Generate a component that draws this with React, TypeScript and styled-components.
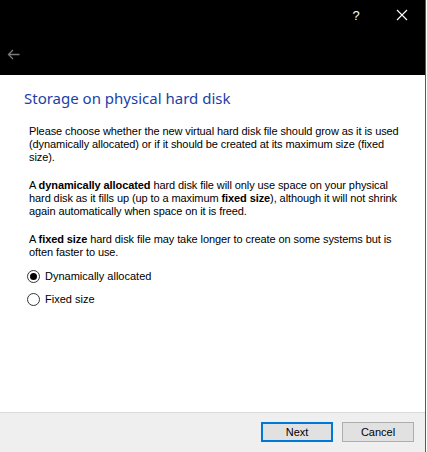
import React from 'react';
import styled, { createGlobalStyle } from 'styled-components';

const GlobalStyle = createGlobalStyle`
  html, body {
    margin: 0;
    padding: 0;
    background: #ffffff;
  }
`;

const Window = styled.div`
  width: 425px;
  height: 452px;
  border-right: 1px solid #5a5a5a;
  display: flex;
  flex-direction: column;
  font-family: 'Liberation Sans', Arial, sans-serif;
  color: #000;
`;

const Header = styled.div`
  height: 75px;
  background: #000;
  display: flex;
  flex-direction: column;
  flex-shrink: 0;
`;

const TitleBar = styled.div`
  height: 30px;
  display: flex;
  justify-content: flex-end;
  align-items: center;
`;

const CaptionButton = styled.div`
  width: 46px;
  height: 30px;
  display: flex;
  align-items: center;
  justify-content: center;
  color: #fff;
  font-family: 'Liberation Sans', sans-serif;
  font-size: 13px;
`;

const BackRow = styled.div`
  flex: 1;
  display: flex;
  align-items: center;
  padding-left: 7px;
  padding-top: 3px;
`;

const Content = styled.div`
  flex: 1;
  display: flex;
  flex-direction: column;
  padding: 13px 0 0 24px;
`;

const Title = styled.h1`
  margin: 0 0 17px 0;
  font-family: 'Noto Sans', sans-serif;
  font-weight: 400;
  font-size: 15px;
  line-height: 20px;
  color: #1a3fa8;
`;

const Body = styled.div`
  padding-left: 5px;
  display: flex;
  flex-direction: column;
  gap: 15px;
`;

const Para = styled.p`
  margin: 0;
  font-family: 'Liberation Sans', Arial, sans-serif;
  font-size: 11px;
  line-height: 13px;
  letter-spacing: -0.09px;
  white-space: nowrap;
`;

const Options = styled.div`
  display: flex;
  flex-direction: column;
  gap: 9px;
  margin-left: -2px;
  margin-top: -5px;
`;

const Option = styled.label`
  display: flex;
  align-items: center;
  gap: 5px;
  font-family: 'Liberation Sans', Arial, sans-serif;
  font-size: 11px;
  height: 14px;
`;

const RadioCircle = styled.span<{ $checked: boolean }>`
  width: 11px;
  height: 11px;
  border: 1px solid #333;
  border-radius: 50%;
  display: flex;
  align-items: center;
  justify-content: center;
  &::after {
    content: '';
    width: 7px;
    height: 7px;
    border-radius: 50%;
    background: ${(p) => (p.$checked ? '#000' : 'transparent')};
  }
`;

const Footer = styled.div`
  height: 40px;
  box-sizing: border-box;
  flex-shrink: 0;
  border-top: 1px solid #dadada;
  background: #efefef;
  display: flex;
  justify-content: flex-end;
  align-items: flex-start;
  padding: 9px 11px 0 0;
  gap: 9px;
`;

const Button = styled.button<{ $primary?: boolean }>`
  width: 72px;
  height: 20px;
  box-sizing: border-box;
  background: #e1e1e1;
  border: ${(p) => (p.$primary ? '2px solid #0078d7' : '1px solid #adadad')};
  font-family: 'Liberation Sans', Arial, sans-serif;
  font-size: 11px;
  color: #000;
  padding: 0;
  display: flex;
  align-items: center;
  justify-content: center;
`;

const App = () => {
  return (
    <>
      <GlobalStyle />
      <Window>
        <Header>
          <TitleBar>
            <CaptionButton>?</CaptionButton>
            <CaptionButton>
              <svg width="12" height="12" viewBox="0 0 12 12">
                <path d="M1 1 L11 11 M11 1 L1 11" stroke="#fff" strokeWidth="1.1" />
              </svg>
            </CaptionButton>
          </TitleBar>
          <BackRow>
            <svg width="13" height="11" viewBox="0 0 13 11">
              <path d="M12.5 5.5 H1.5 M6 1 L1.5 5.5 L6 10" stroke="#7a7a7a" strokeWidth="1.3" fill="none" />
            </svg>
          </BackRow>
        </Header>
        <Content>
          <Title>Storage on physical hard disk</Title>
          <Body>
            <Para>
              Please choose whether the new virtual hard disk file should grow as it is used
              <br />
              (dynamically allocated) or if it should be created at its maximum size (fixed
              <br />
              size).
            </Para>
            <Para>
              A <b>dynamically allocated</b> hard disk file will only use space on your physical
              <br />
              hard disk as it fills up (up to a maximum <b>fixed size</b>), although it will not shrink
              <br />
              again automatically when space on it is freed.
            </Para>
            <Para>
              A <b>fixed size</b> hard disk file may take longer to create on some systems but is
              <br />
              often faster to use.
            </Para>
            <Options>
              <Option>
                <RadioCircle $checked />
                Dynamically allocated
              </Option>
              <Option>
                <RadioCircle $checked={false} />
                Fixed size
              </Option>
            </Options>
          </Body>
        </Content>
        <Footer>
          <Button $primary>Next</Button>
          <Button>Cancel</Button>
        </Footer>
      </Window>
    </>
  );
};

export default App;
